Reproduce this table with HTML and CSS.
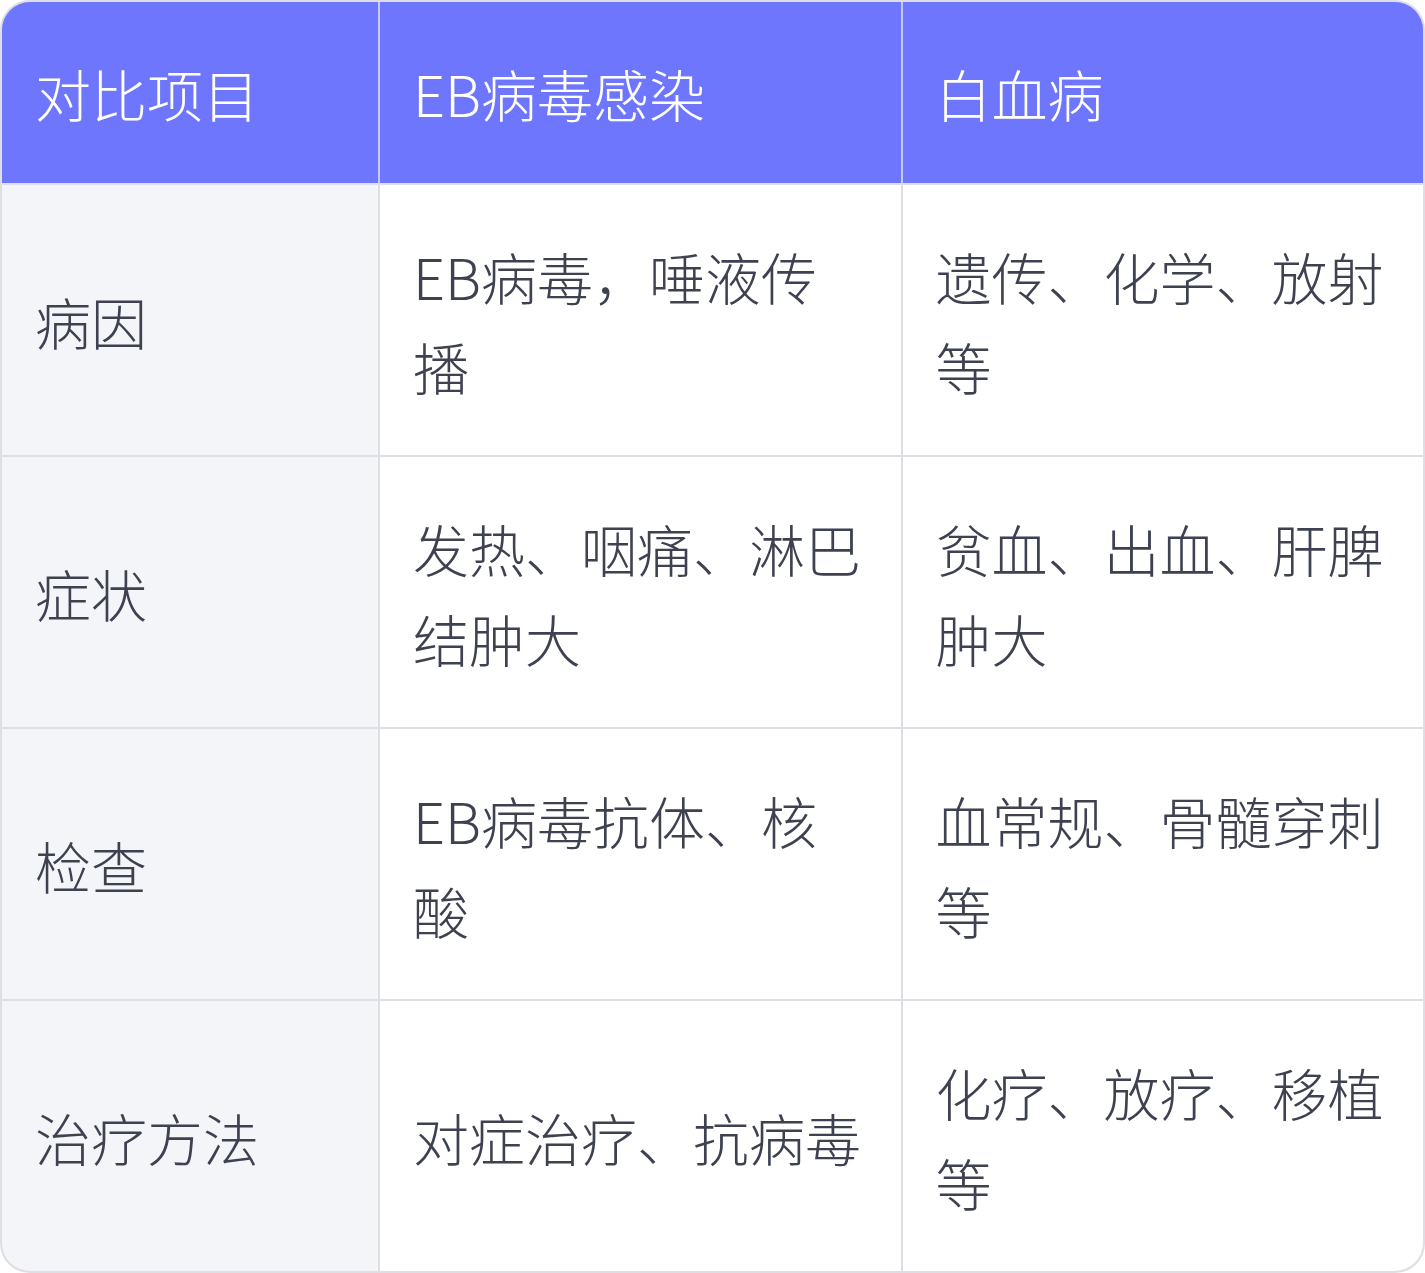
FILE: index.html
```html
<!DOCTYPE html>
<html lang="zh-CN">
<head>
<meta charset="utf-8">
<link rel="stylesheet" href="styles.css">
</head>
<body>
<div class="table">
  <div class="cell head">对比项目</div>
  <div class="cell head">EB病毒感染</div>
  <div class="cell head">白血病</div>

  <div class="cell label">病因</div>
  <div class="cell">EB病毒，唾液传播</div>
  <div class="cell">遗传、化学、放射等</div>

  <div class="cell label">症状</div>
  <div class="cell">发热、咽痛、淋巴结肿大</div>
  <div class="cell">贫血、出血、肝脾肿大</div>

  <div class="cell label">检查</div>
  <div class="cell">EB病毒抗体、核酸</div>
  <div class="cell">血常规、骨髓穿刺等</div>

  <div class="cell label">治疗方法</div>
  <div class="cell">对症治疗、抗病毒</div>
  <div class="cell">化疗、放疗、移植等</div>
</div>
</body>
</html>
```
FILE: styles.css
```css
html, body {
  margin: 0;
  padding: 0;
  background: #ffffff;
}
.table {
  box-sizing: border-box;
  width: 1425px;
  height: 1273px;
  border: 2px solid #dedee4;
  border-radius: 30px;
  overflow: hidden;
  background: linear-gradient(#c6c9fe 0, #c6c9fe 181px, #dedee4 181px);
  display: grid;
  grid-template-columns: 376px 1fr 1fr;
  grid-template-rows: 181px repeat(4, 1fr);
  gap: 2px;
  font-family: "Noto Sans CJK SC", "Noto Sans", sans-serif;
  font-weight: 300;
  font-size: 56px;
  line-height: 90px;
  color: #3e4150;
}
.cell {
  background: #ffffff;
  padding: 2px 33px 0 33px;
  display: flex;
  align-items: center;
}
.cell.head {
  background: #6f76fe;
  color: #ffffff;
  padding-top: 0;
}
.cell.label {
  background: #f4f5f9;
}
```
